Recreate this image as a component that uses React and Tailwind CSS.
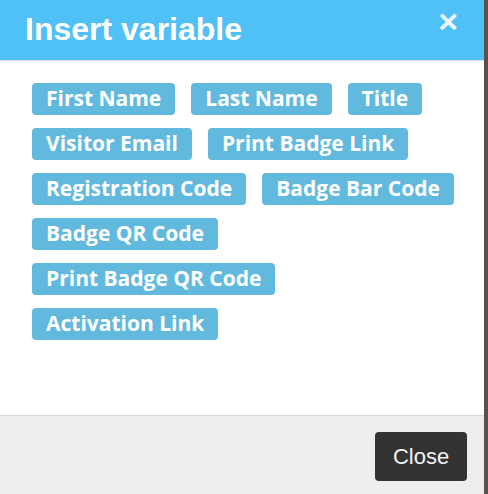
import React from 'react';

const variables = [
  'First Name',
  'Last Name',
  'Title',
  'Visitor Email',
  'Print Badge Link',
  'Registration Code',
  'Badge Bar Code',
  'Badge QR Code',
  'Print Badge QR Code',
  'Activation Link',
];

const App = () => {
  return (
    <div className="flex h-[494px] w-[488px] overflow-hidden bg-[#5a5048]">
      <div className="flex h-full w-[484px] flex-col bg-white">
        <div className="flex h-[61px] items-start justify-between border-b border-[#e0e0e0] bg-[#4fc1f7] pl-[25px] pr-[26px]">
          <h1 className="mt-[9px] font-['Liberation_Sans',Arial,sans-serif] text-[32px] font-bold leading-[40px] text-white">
            Insert variable
          </h1>
          <button className="mt-[4px] font-['Liberation_Sans',Arial,sans-serif] text-[34px] font-bold leading-[34px] text-[#eef6fb]">
            ×
          </button>
        </div>

        <div className="flex-1 pl-[32px] pr-[14px] pt-[22px]">
          <div className="flex flex-wrap gap-x-[16px] gap-y-[13px]">
            {variables.map((v) => (
              <span
                key={v}
                className="flex h-[32px] items-center rounded-[4px] bg-[#62b9de] px-[14px] font-['Open_Sans','Noto_Sans',sans-serif] text-[21px] font-bold text-white"
              >
                {v}
              </span>
            ))}
          </div>
        </div>

        <div className="flex h-[79px] items-start justify-end border-t border-[#d6d6d6] bg-[#eeeeee] pr-[17px] pt-[16px]">
          <button className="h-[49px] w-[92px] rounded-[4px] bg-[#333333] font-['Liberation_Sans',Arial,sans-serif] text-[22px] text-[#f2f2f2]">
            Close
          </button>
        </div>
      </div>
    </div>
  );
};

export default App;
